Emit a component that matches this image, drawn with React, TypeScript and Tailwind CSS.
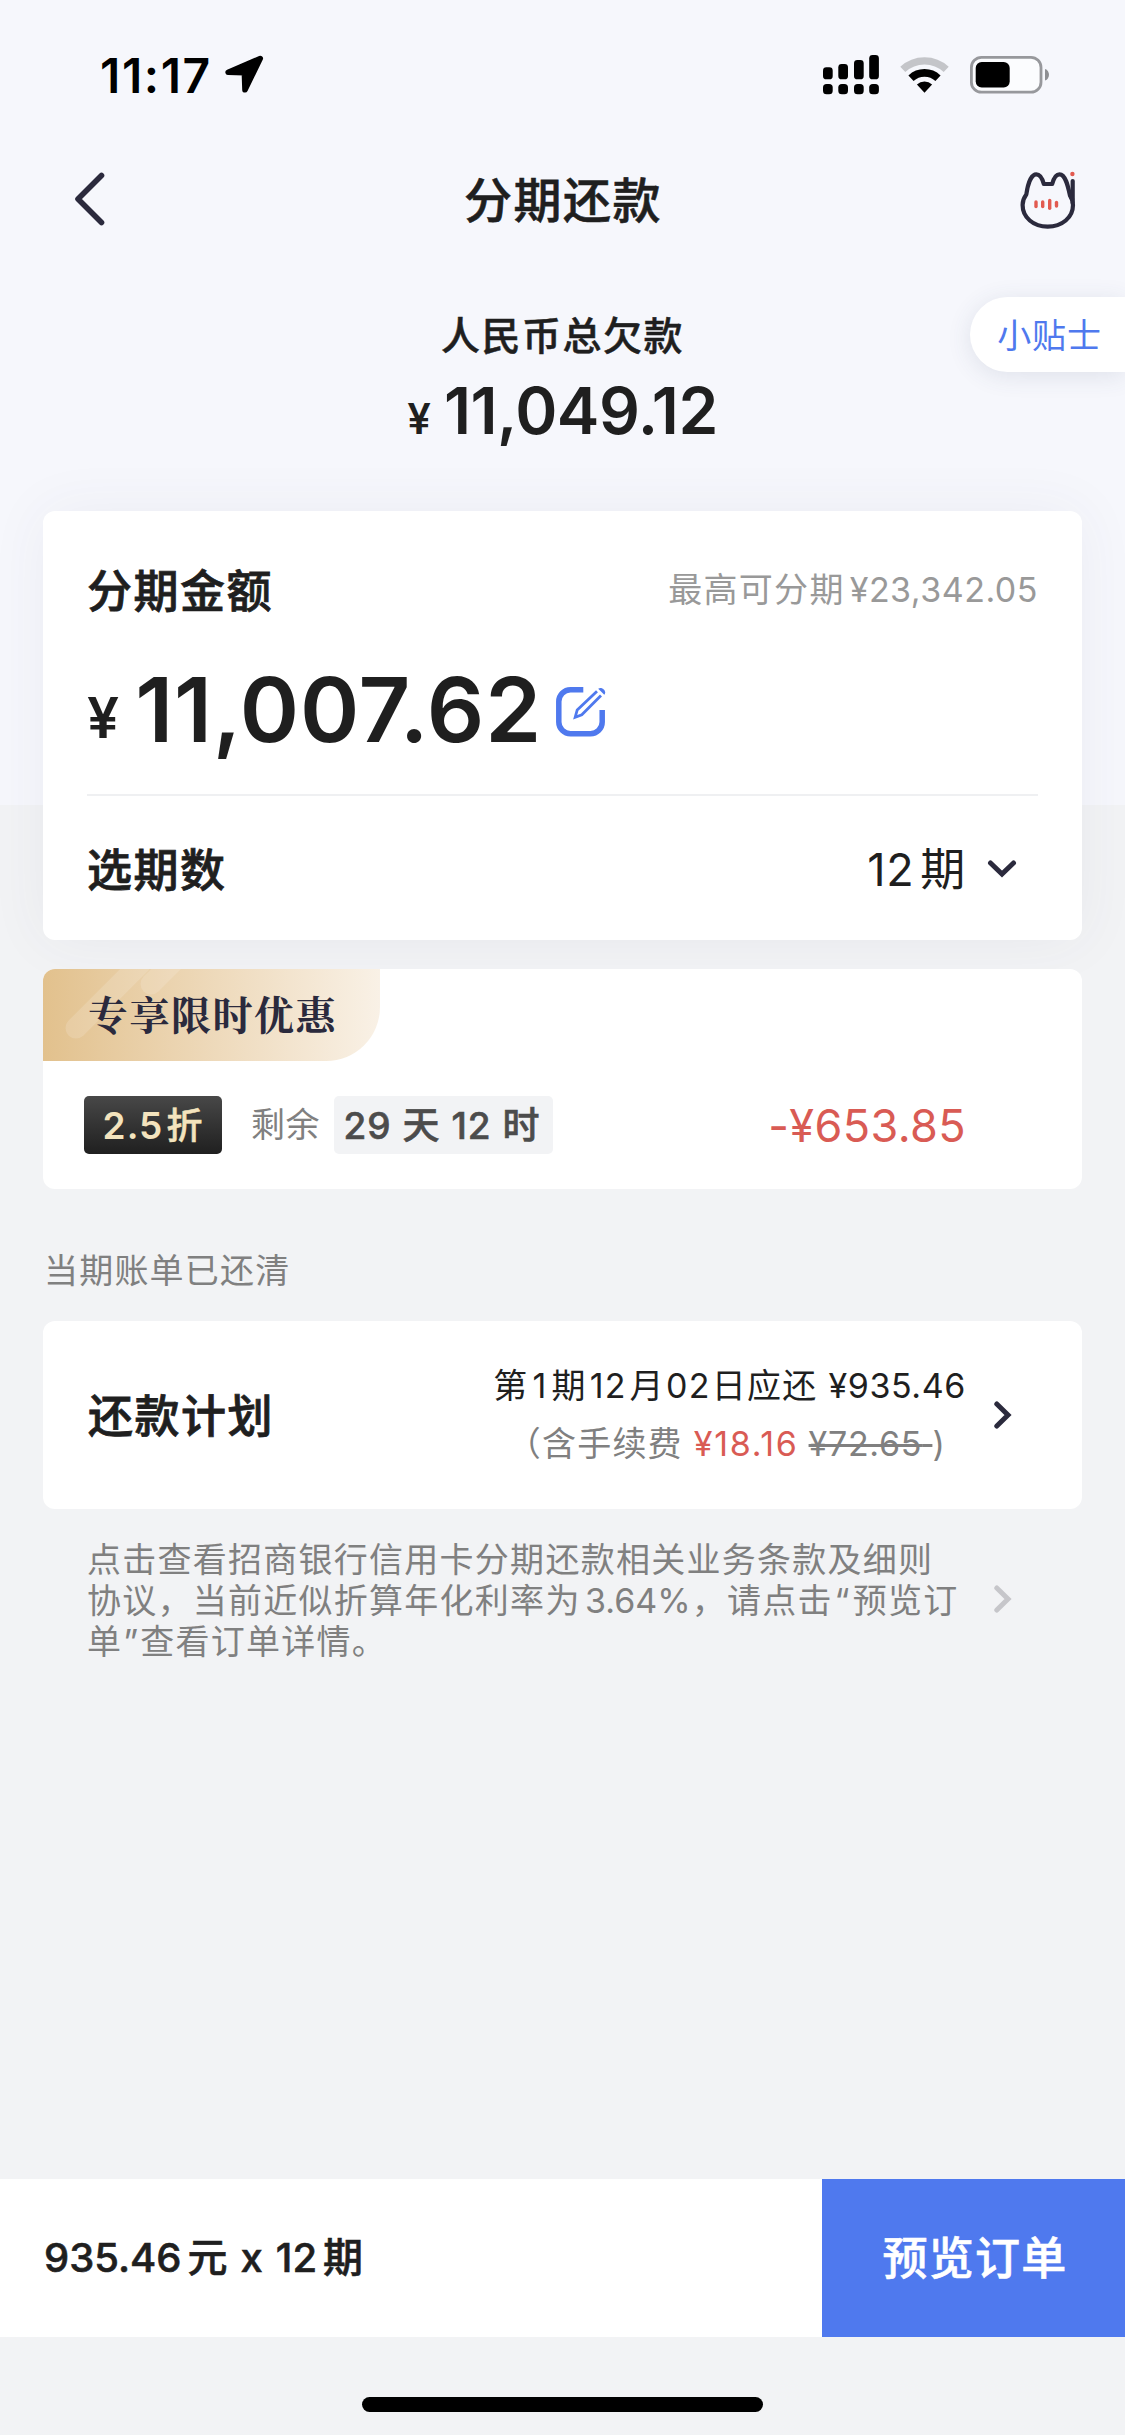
import React from "react";

type IconProps = {
  className?: string;
};

const LocationIcon = () => (
  <svg width="40" height="40" viewBox="0 0 40 40">
    <path
      d="M35.2 3.6 3.2 17.3 19.4 17.7 20 34.8Z"
      fill="#000"
      stroke="#000"
      strokeWidth="5.6"
      strokeLinejoin="round"
    />
  </svg>
);

const SignalIcon = () => (
  <svg width="56" height="40" viewBox="0 0 56 40" fill="#000">
    <rect x="0" y="12.3" width="9.7" height="12" rx="3.4" />
    <rect x="15.3" y="9" width="9.7" height="15.3" rx="3.4" />
    <rect x="31" y="5" width="9.7" height="19.3" rx="3.4" />
    <rect x="46.2" y="0" width="9.7" height="24.3" rx="3.4" />
    <rect x="0" y="29" width="9.7" height="10.3" rx="3.6" />
    <rect x="15.3" y="29" width="9.7" height="10.3" rx="3.6" />
    <rect x="31" y="29" width="9.7" height="10.3" rx="3.6" />
    <rect x="46.2" y="29" width="9.7" height="10.3" rx="3.6" />
  </svg>
);

const WifiIcon = () => (
  <svg width="49" height="37" viewBox="0 0 49 37" fill="none">
    <path
      d="M2.8 12.4A31.8 31.8 0 0 1 46.2 12.4"
      stroke="#c4c5c9"
      strokeWidth="7.4"
    />
    <path
      d="M11 21.2A19.8 19.8 0 0 1 38 21.2"
      stroke="#000"
      strokeWidth="7.6"
    />
    <path d="M24.5 35.7 16.9 27.4A11.5 11.5 0 0 1 32.1 27.4Z" fill="#000" />
  </svg>
);

const BatteryIcon = () => (
  <svg width="80" height="38" viewBox="0 0 80 38">
    <rect
      x="1.4"
      y="1.4"
      width="69.6"
      height="34.8"
      rx="10"
      fill="#fbfcfe"
      stroke="#97989c"
      strokeWidth="2.8"
    />
    <rect x="5.7" y="6" width="34" height="25.6" rx="6" fill="#000" />
    <path d="M75 13C80.3 14.5 80.3 23 75 24.5Z" fill="#8e8f93" />
  </svg>
);

const CatIcon = () => (
  <svg width="57" height="60" viewBox="0 0 57 60" fill="none">
    <g stroke="#2b2a3d" strokeWidth="4.2" strokeLinejoin="round">
      <path d="M6.3 24.5C7.5 16 10.5 4.3 16.3 4.3 20.5 4.3 22.5 9 23.8 14H32.2C33.5 9 35.5 4.3 39.5 4.3 45.5 4.3 48 16 50 25.5 52 28.5 53 31.5 53 35 53 47.5 42 56.6 27.7 56.6S2.6 47.5 2.6 35C2.6 31 4 27.5 6.3 24.5Z" />
      <path d="M52.7 11V33" strokeLinecap="round" />
      <path d="M50 23 52.5 30" />
    </g>
    <circle cx="52.4" cy="4" r="2.2" fill="#e25a50" />
    <g stroke="#e25a50" strokeWidth="3.4" strokeLinecap="round">
      <path d="M16 32V36.6" />
      <path d="M22.7 32V36.6" />
      <path d="M29.7 30.5V38.3" />
      <path d="M36.5 32.5V36" />
    </g>
  </svg>
);

const EditIcon = () => (
  <svg width="50" height="50" viewBox="0 0 50 50" fill="none" stroke="#4f79ee">
    <path
      d="M27.3 2.8H14.5A11.7 11.7 0 0 0 2.8 14.5V35A11.7 11.7 0 0 0 14.5 46.7H34.5A11.7 11.7 0 0 0 46.2 35V23"
      strokeWidth="5.5"
    />
    <path
      d="M41 4.2 21.2 23 19.2 30.2 25.8 27.8 45 8.6"
      strokeWidth="2.8"
    />
    <path d="M42.2 1.8C45.5-1.2 51.4 4 48.3 7.8Z" fill="#4f79ee" stroke="none" />
  </svg>
);

const ChevronRight = ({ className }: IconProps) => (
  <svg
    className={className}
    width="18"
    height="28"
    viewBox="0 0 18 28"
    fill="none"
    stroke="currentColor"
    strokeWidth="5"
    strokeLinecap="round"
  >
    <path d="M2.8 3 14 14 2.8 25" />
  </svg>
);

const StatusBar = () => (
  <div className="flex h-[150px] items-center justify-between pr-[75px] pl-[100px] text-black">
    <div className="flex items-center gap-[13px]">
      <span className="pt-px text-[48px] leading-none font-semibold tracking-[1.6px]">
        11:17
      </span>
      <LocationIcon />
    </div>
    <div className="flex items-center">
      <SignalIcon />
      <div className="ml-[21px]">
        <WifiIcon />
      </div>
      <div className="ml-[21px]">
        <BatteryIcon />
      </div>
    </div>
  </div>
);

const NavBar = () => (
  <div className="flex h-[98px] items-center justify-between pr-[48px] pl-[74px]">
    <button>
      <svg width="32" height="54" viewBox="0 0 32 54" fill="none">
        <path
          d="M27.5 3.5 4 27 27.5 50.5"
          stroke="#2b2a3d"
          strokeWidth="5.6"
          strokeLinecap="round"
          strokeLinejoin="round"
        />
      </svg>
    </button>
    <h1 className="pt-[3px] text-[48px] leading-none font-medium tracking-[1.5px] [-webkit-text-stroke:0.6px]">
      分期还款
    </h1>
    <button className="pt-[2px]">
      <CatIcon />
    </button>
  </div>
);

const CardTitle = ({ children }: { children: React.ReactNode }) => (
  <h2 className="pt-[2px] text-[45px] leading-none font-medium tracking-[1.5px] [-webkit-text-stroke:0.8px]">
    {children}
  </h2>
);

const AmountCard = () => (
  <section className="mx-[43px] mt-[63px] h-[429px] rounded-[12px] bg-white px-[44px] pt-[44px] shadow-[0_0_60px_rgba(60,70,110,0.06)]">
    <div className="flex h-[70px] items-center justify-between">
      <CardTitle>分期金额</CardTitle>
      <p className="text-[34px] leading-none tracking-[0.5px] text-[#999]">
        <span className="mr-[5px] tracking-[1.3px]">最高可分期</span>
        ¥23,342.05
      </p>
    </div>
    <div className="mt-[40px] flex h-[90px] items-center">
      <span className="mt-[15px] text-[57px] leading-none font-semibold">
        ¥
      </span>
      <span className="ml-[16px] text-[90px] leading-none font-semibold tracking-[0.8px]">
        11,007.62
      </span>
      <button className="mt-[3px] ml-[14px]">
        <EditIcon />
      </button>
    </div>
    <div className="mt-[39px] h-[2px] bg-[#eff0f2]" />
    <div className="flex h-[146px] items-center justify-between pr-[21px]">
      <CardTitle>选期数</CardTitle>
      <div className="flex items-center">
        <span className="text-[45px] leading-none tracking-[0.7px]">
          12<span className="ml-[6px]">期</span>
        </span>
        <svg className="ml-[21px]" width="30" height="20" viewBox="0 0 30 20">
          <path
            d="M3.5 4 15 15 26.500 4"
            fill="none"
            stroke="#2b2a3d"
            strokeWidth="5"
            strokeLinecap="round"
          />
        </svg>
      </div>
    </div>
  </section>
);

const PromoCard = () => (
  <section className="mx-[43px] mt-[29px] h-[220px] overflow-hidden rounded-[12px] bg-white">
    <div className="relative flex h-[92px] w-[337px] items-center overflow-hidden rounded-br-[54px] bg-gradient-to-r from-[#e2c18d] to-[#f9f1e6] pb-[5px] pl-[45px]">
      <svg
        className="absolute inset-0"
        width="337"
        height="92"
        viewBox="0 0 337 92"
        stroke="#fff"
        strokeOpacity="0.15"
        strokeWidth="21"
        strokeLinecap="round"
      >
        <path d="M33 59 98 -6" />
        <path d="M108 15 138 -15" />
      </svg>
      <span className="relative font-['Noto_Serif_CJK_SC','Source_Han_Serif_SC','Songti_SC','Noto_Sans_CJK_SC',serif] text-[40px] leading-none font-bold tracking-[1.5px] text-[#2b2a3d]">
        专享限时优惠
      </span>
    </div>
    <div className="mt-[35px] flex h-[58px] items-center pr-[116px] pl-[41px]">
      <span className="flex h-[58px] w-[138px] items-center justify-center rounded-[5px] bg-gradient-to-b from-[#484848] to-[#202020] pt-px text-[37px] leading-none font-semibold tracking-[1px] text-[#f3e3bd]">
        2.5
        <span className="ml-[3px] text-[36px] font-medium [-webkit-text-stroke:0.5px]">
          折
        </span>
      </span>
      <span className="ml-[29px] text-[34px] leading-none tracking-[0.5px] text-[#808080]">
        剩余
      </span>
      <span className="ml-[14px] flex h-[58px] w-[219px] items-center justify-center rounded-[5px] bg-[#f2f3f5] pt-px pr-[3px] text-[37px] leading-none font-medium tracking-[1px] whitespace-pre text-[#4c4c4c] [-webkit-text-stroke:0.6px]">
        29 天 12 时
      </span>
      <span className="ml-auto text-[45px] leading-none tracking-[0.4px] text-[#d95b54]">
        -¥653.85
      </span>
    </div>
  </section>
);

const PlanCard = () => (
  <section className="mx-[43px] mt-[33px] flex h-[188px] items-center rounded-[12px] bg-white pr-[70px] pl-[45px]">
    <CardTitle>还款计划</CardTitle>
    <div className="ml-auto flex flex-col items-end text-[34px] leading-[58px]">
      <p className="tracking-[1.2px]">
        第<span className="inline-block w-[23px] text-center">1</span>期
        <span className="inline-block w-[43px] text-center">12</span>月
        <span className="inline-block w-[47px] text-center">02</span>日应还
        <span className="ml-[11px] tracking-[0.6px]">¥935.46</span>
      </p>
      <p className="pr-[20px] tracking-[1.2px] text-[#808080]">
        （含手续费
        <span className="ml-[11px] tracking-[1.7px] text-[#d95b54]">
          ¥18.16
        </span>
        <span className="ml-[10px] tracking-[0.7px] line-through decoration-[3px]">
          ¥72.65{" "}
        </span>
        )
      </p>
    </div>
    <ChevronRight className="ml-[28px] text-[#2b2a3d]" />
  </section>
);

const Terms = () => (
  <div className="mx-[43px] mt-[30px] flex items-center justify-between pr-[70px] pl-[44px] text-[#808080]">
    <div className="text-[34px] leading-[41px] tracking-[1.26px] whitespace-nowrap">
      <p>点击查看招商银行信用卡分期还款相关业务条款及细则</p>
      <p>
        协议，当前近似折算年化利率为
        <span className="inline-block w-[111px] pr-px text-right tracking-[0px]">
          3.64%
        </span>
        ，请点击
        <span className="inline-block w-[20px] text-center">“</span>预览订
      </p>
      <p>
        单<span className="inline-block w-[18px] text-center">”</span>
        查看订单详情。
      </p>
    </div>
    <ChevronRight className="mb-[3px] text-[#c6c6ca]" />
  </div>
);

const BottomBar = () => (
  <footer className="mt-auto">
    <div className="flex h-[158px] items-center justify-between bg-white">
      <p className="pl-[44px] text-[40px] leading-none font-medium [-webkit-text-stroke:0.6px]">
        935.46<span className="mr-[13px] ml-[6px]">元</span>x
        <span className="ml-[13px]">12</span>
        <span className="ml-[6px]">期</span>
      </p>
      <button className="h-[158px] w-[303px] bg-[#4f79ee] pl-[3px] text-[45px] leading-none font-medium tracking-[1.3px] text-white [-webkit-text-stroke:0.6px]">
        预览订单
      </button>
    </div>
    <div className="flex h-[98px] justify-center pt-[60px]">
      <div className="h-[15px] w-[401px] rounded-full bg-black" />
    </div>
  </footer>
);

export default function App() {
  return (
    <div className="relative flex h-[2435px] w-[1125px] flex-col overflow-hidden bg-[linear-gradient(#f6f7fc_805px,#f2f3f5_805px)] font-['Inter','Noto_Sans_CJK_SC',sans-serif] text-[#1f1f1f]">
      <StatusBar />
      <NavBar />
      <div className="mt-[57px] flex flex-col items-center">
        <h2 className="flex h-[60px] items-center pt-px text-[39px] leading-none font-medium tracking-[1.5px] [-webkit-text-stroke:0.5px]">
          人民币总欠款
        </h2>
        <div className="mt-[9px] flex h-[74px] items-center font-semibold">
          <span className="mt-[15px] text-[42px] leading-none">¥</span>
          <span className="ml-[13px] text-[64px] leading-none tracking-[-0.5px]">
            11,049.12
          </span>
        </div>
      </div>
      <button className="absolute top-[297px] right-0 h-[75px] w-[155px] rounded-l-full bg-white pt-[2px] pl-[4px] text-[34px] leading-none tracking-[0.8px] text-[#4f79ee] shadow-[0_4px_24px_rgba(60,70,110,0.12)]">
        小贴士
      </button>
      <AmountCard />
      <PromoCard />
      <p className="mx-[44px] mt-[64px] text-[34px] leading-[35px] tracking-[1.2px] text-[#808080]">
        当期账单已还清
      </p>
      <PlanCard />
      <Terms />
      <BottomBar />
    </div>
  );
}
